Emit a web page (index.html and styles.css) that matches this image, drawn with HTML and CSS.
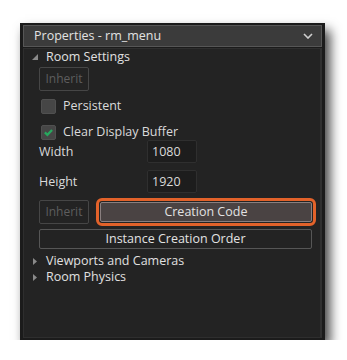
FILE: index.html
```html
<!DOCTYPE html>
<html>
<head>
<meta charset="utf-8">
<link rel="stylesheet" href="styles.css">
</head>
<body>
<div class="panel">
  <div class="header">
    <span class="title">Properties - rm_menu</span>
    <svg class="chev" width="10" height="6" viewBox="0 0 10 6"><path d="M1 1 L5 5 L9 1" fill="none" stroke="#cfcfcf" stroke-width="1.6"/></svg>
  </div>
  <div class="body">
    <div class="section">
      <svg class="tri" width="6" height="6" viewBox="0 0 6 6"><path d="M6 0 L6 6 L0 6 Z" fill="#8a8a8a"/></svg>
      <span>Room Settings</span>
    </div>
    <div class="content">
      <div class="btn disabled inherit1">Inherit</div>
      <div class="check persist"><span class="box"></span><span>Persistent</span></div>
      <div class="check clear"><span class="box"><svg width="15" height="15" viewBox="0 0 15 15"><path d="M3.3 7.4 L6.2 10.2 L11.6 4.6" fill="none" stroke="#27a85e" stroke-width="2.6"/></svg></span><span>Clear Display Buffer</span></div>
      <div class="field fw"><span class="lbl">Width</span><span class="input">1080</span></div>
      <div class="field fh"><span class="lbl">Height</span><span class="input">1920</span></div>
      <div class="actions">
        <div class="btn disabled">Inherit</div>
        <div class="btn creation">Creation Code</div>
      </div>
      <div class="btn order">Instance Creation Order</div>
    </div>
    <div class="section collapsed first">
      <svg class="tri" width="6" height="7" viewBox="0 0 6 7"><path d="M1 0 L5 3.5 L1 7 Z" fill="#8a8a8a"/></svg>
      <span>Viewports and Cameras</span>
    </div>
    <div class="section collapsed">
      <svg class="tri" width="6" height="7" viewBox="0 0 6 7"><path d="M1 0 L5 3.5 L1 7 Z" fill="#8a8a8a"/></svg>
      <span>Room Physics</span>
    </div>
  </div>
</div>
</body>
</html>
```
FILE: styles.css
```css
html, body {
  margin: 0;
  padding: 0;
  background: #ffffff;
}
body {
  font-family: "Open Sans", "Noto Sans", sans-serif;
  font-size: 12px;
  line-height: 16px;
  color: #dadada;
}
.panel {
  margin: 23px 0 0 20px;
  width: 299px;
  height: 313px;
  padding: 2px 3px 2px 3px;
  background: #1b1b1b;
  display: flex;
  flex-direction: column;
  box-shadow: 5px 7px 11px rgba(0, 0, 0, 0.75);
}
.header {
  height: 20px;
  background: #3b3b3b;
  border: 1px solid #565656;
  display: flex;
  align-items: center;
  justify-content: space-between;
  padding: 0 8px 0 10px;
  font-size: 12.5px;
  color: #e2e2e2;
}
.chev {
  display: block;
}
.body {
  flex: 1;
  margin-top: 1px;
  background: #232323;
  border: 1px solid #2e2e2e;
  border-right: 2px solid #303030;
}
.section {
  height: 16px;
  display: flex;
  align-items: center;
  padding-left: 8px;
  font-size: 12.5px;
  color: #e0e0e0;
}
.section .tri {
  display: block;
  margin-right: 8px;
}
.section.first {
  margin-top: 4px;
}
.content {
  padding: 0 8px 0 15px;
}
.btn {
  box-sizing: border-box;
  display: flex;
  align-items: center;
  justify-content: center;
  border: 1px solid #565656;
  border-radius: 2px;
  font-size: 12.5px;
  color: #e2e2e2;
}
.btn.disabled {
  width: 50px;
  height: 24px;
  border-color: #464646;
  color: #5e5e5e;
  font-size: 12px;
}
.inherit1 {
  margin-top: 2px;
}
.check {
  display: flex;
  align-items: center;
  height: 16px;
  padding-left: 2px;
  font-size: 12.5px;
}
.check .box {
  box-sizing: border-box;
  width: 15px;
  height: 15px;
  background: #464646;
  border: 1px solid #505050;
  border-radius: 2px;
  margin-right: 7px;
  display: flex;
  align-items: center;
  justify-content: center;
}
.check .box svg {
  display: block;
}
.persist {
  margin-top: 7px;
}
.clear {
  margin-top: 10px;
}
.field {
  display: flex;
  align-items: center;
  height: 23px;
  font-size: 12.5px;
}
.field .lbl {
  width: 108px;
}
.field .input {
  box-sizing: border-box;
  width: 50px;
  height: 23px;
  background: #1d1d1d;
  border: 1px solid #2f2f2f;
  border-radius: 2px;
  padding-left: 4px;
  display: flex;
  align-items: center;
}
.fw {
  margin-top: 0;
}
.fh {
  margin-top: 7px;
}
.actions {
  display: flex;
  align-items: center;
  margin-top: 7px;
  height: 24px;
}
.btn.creation {
  margin-left: 11px;
  width: 213px;
  height: 20px;
  background: #4a4343;
  border-color: #8a7f7f;
  outline: 3px solid #e2622a;
  outline-offset: 1px;
}
.btn.order {
  margin-top: 5px;
  width: 273px;
  height: 20px;
}
```
